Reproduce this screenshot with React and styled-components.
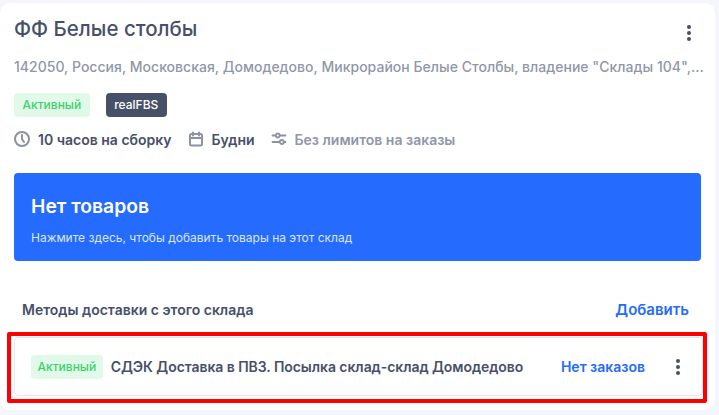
import React from 'react'
import styled, { createGlobalStyle } from 'styled-components'

const Global = createGlobalStyle`
  html, body {
    margin: 0;
    padding: 0;
    background: #f4f6fb;
    font-family: "Inter", "Noto Sans", sans-serif;
  }
  * { box-sizing: border-box; }
`

const Page = styled.div`
  width: 719px;
  height: 415px;
  padding: 3px 4px 5px 0;
  overflow: hidden;
`

const Card = styled.div`
  position: relative;
  height: 100%;
  background: #fff;
  border-radius: 10px;
  padding: 13px 14px 0;
`

const Header = styled.div`
  display: flex;
  justify-content: space-between;
  align-items: flex-start;
  height: 26px;
`

const Title = styled.h1`
  margin: 0;
  font-size: 20.5px;
  line-height: 26px;
  font-weight: 500;
  color: #475069;
`

const Dots = styled.svg`
  display: block;
  flex: none;
  color: #475069;
  margin: ${p => p.$margin};
`

const Address = styled.div`
  margin-top: 15px;
  font-size: 14px;
  letter-spacing: 0.02px;
  line-height: 20px;
  font-weight: 500;
  color: #9097a9;
  white-space: nowrap;
`

const Tags = styled.div`
  display: flex;
  gap: 16px;
  margin-top: 16px;
`

const Tag = styled.span`
  display: inline-block;
  height: 24px;
  padding: 0 ${p => p.$pad || 8.5}px;
  border-radius: 4px;
  font-size: 12px;
  line-height: 24px;
  font-weight: 500;
  background: ${p => (p.$dark ? '#475069' : '#e1f9e9')};
  color: ${p => (p.$dark ? '#fff' : '#3fcf6e')};
`

const Meta = styled.div`
  display: flex;
  align-items: center;
  gap: 16px;
  margin-top: 12px;
  height: 20px;
`

const MetaItem = styled.div`
  display: flex;
  align-items: center;
  gap: 8px;
  font-size: 14px;
  font-weight: 600;
  color: ${p => (p.$muted ? '#9097a9' : '#475069')};
  svg { flex: none; color: #8b92a5; }
`

const Banner = styled.div`
  margin-top: 24px;
  height: 88px;
  background: #246bfe;
  border-radius: 4px;
  padding: 21px 17px 0;
  color: #fff;
`

const BannerTitle = styled.div`
  font-size: 19.3px;
  line-height: 24px;
  font-weight: 600;
`

const BannerText = styled.div`
  margin-top: 12px;
  font-size: 12px;
  line-height: 16px;
  color: #dbe6ff;
`

const MethodsHead = styled.div`
  display: flex;
  justify-content: space-between;
  align-items: center;
  margin-top: 38px;
  padding: 0 12px 0 8px;
  height: 20px;
`

const MethodsTitle = styled.div`
  font-size: 14px;
  font-weight: 600;
  color: #475069;
`

const AddLink = styled.a`
  font-size: 15px;
  font-weight: 600;
  color: #246bfe;
`

const MethodRow = styled.div`
  display: flex;
  align-items: center;
  height: 59px;
  margin: 18px -2px 0 0;
  padding: 0 22px 0 16px;
  border: 1px solid #e4e6ef;
  border-radius: 4px;
`

const MethodName = styled.div`
  margin-left: 8px;
  flex: 1;
  font-size: 14px;
  letter-spacing: -0.06px;
  font-weight: 600;
  color: #475069;
  white-space: nowrap;
`

const OrdersLink = styled.a`
  font-size: 14px;
  font-weight: 600;
  color: #246bfe;
  margin-right: 31px;
`

const Highlight = styled.div`
  position: absolute;
  left: 7px;
  top: 329px;
  width: 700px;
  height: 71px;
  border: 4px solid #f00;
  border-radius: 2px;
  pointer-events: none;
`

const MoreDots = ({ margin }) => (
  <Dots $margin={margin} width="4" height="16" viewBox="0 0 4 16" fill="currentColor">
    <circle cx="2" cy="2" r="2" />
    <circle cx="2" cy="8" r="2" />
    <circle cx="2" cy="14" r="2" />
  </Dots>
)

const ClockIcon = () => (
  <svg width="16" height="16" viewBox="0 0 16 16" fill="none" stroke="currentColor" strokeWidth="2" strokeLinecap="round" strokeLinejoin="round">
    <circle cx="8" cy="8" r="7" />
    <path d="M8 4v4l2 3" />
  </svg>
)

const CalendarIcon = () => (
  <svg width="16" height="16" viewBox="0 0 16 16" fill="none" stroke="currentColor" strokeWidth="2" strokeLinecap="round" strokeLinejoin="round">
    <rect x="2" y="3" width="12" height="11.5" rx="1.5" />
    <path d="M2 7h12M5 1.5v3M11 1.5v3" />
  </svg>
)

const SlidersIcon = () => (
  <svg width="16" height="16" viewBox="0 0 16 16" fill="none" stroke="currentColor" strokeWidth="1.8" strokeLinecap="round">
    <path d="M1.5 4.5h3M9 4.5h5.5M1.5 11h7M13 11h1.5" />
    <circle cx="6.7" cy="4.5" r="2" />
    <circle cx="10.8" cy="11" r="2" />
  </svg>
)

export default function App() {
  return (
    <Page>
      <Global />
      <Card>
        <Header>
          <Title>ФФ Белые столбы</Title>
          <MoreDots margin="9px 10px 0 0" />
        </Header>
        <Address>142050, Россия, Московская, Домодедово, Микрорайон Белые Столбы, владение "Склады 104",...</Address>
        <Tags>
          <Tag>Активный</Tag>
          <Tag $dark>realFBS</Tag>
        </Tags>
        <Meta>
          <MetaItem><ClockIcon />10 часов на сборку</MetaItem>
          <MetaItem><CalendarIcon />Будни</MetaItem>
          <MetaItem $muted><SlidersIcon />Без лимитов на заказы</MetaItem>
        </Meta>
        <Banner>
          <BannerTitle>Нет товаров</BannerTitle>
          <BannerText>Нажмите здесь, чтобы добавить товары на этот склад</BannerText>
        </Banner>
        <MethodsHead>
          <MethodsTitle>Методы доставки с этого склада</MethodsTitle>
          <AddLink>Добавить</AddLink>
        </MethodsHead>
        <MethodRow>
          <Tag $pad={6.5}>Активный</Tag>
          <MethodName>СДЭК Доставка в ПВЗ. Посылка склад-склад Домодедово</MethodName>
          <OrdersLink>Нет заказов</OrdersLink>
          <MoreDots />
        </MethodRow>
        <Highlight />
      </Card>
    </Page>
  )
}
